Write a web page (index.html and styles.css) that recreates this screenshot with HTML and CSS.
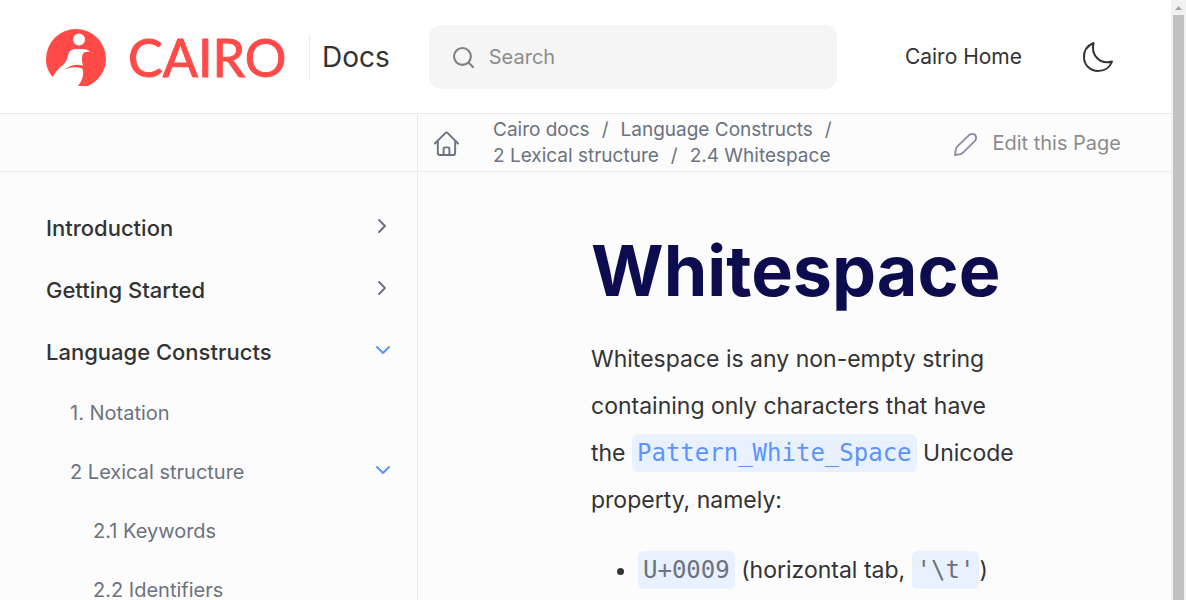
FILE: index.html
```html
<!DOCTYPE html>
<html lang="en">
<head>
<meta charset="utf-8">
<meta name="viewport" content="width=device-width, initial-scale=1">
<title>Whitespace - Cairo Docs</title>
<link rel="stylesheet" href="styles.css">
</head>
<body>
<div class="page">
  <header class="header">
    <a class="brand" href="#">
      <svg class="brand-mark" viewBox="0 0 60 58" aria-hidden="true">
        <path fill="#ff4a48" fill-rule="evenodd" d="M30 1A30 30 0 0 1 60 31C60 42 53 53 42 58H32C35 54 36.500 51 37 47C37.500 43 37 40.500 35 40C30 38.500 24 39 18.500 41.500C24 37 31 35.500 37 37.500C35.500 32 35.500 27 38 24.500C40 23.500 43 24 44 23.500C41 21 37 21 33 21C27 20.500 24 21.500 22.500 26C21 31 20.500 34 17 37C13 39.500 10 44 6.500 49C2 43 0 38 0 31A30 30 0 0 1 30 1ZM33 5.500A6 6 0 1 0 33 17.500A6 6 0 0 0 33 5.500Z"/>
      </svg>
      <span class="brand-name">CAIRO</span>
    </a>
    <a class="docs" href="#">Docs</a>
    <label class="search">
      <svg class="search-icon" viewBox="0 0 20 20" aria-hidden="true"><circle cx="9" cy="9" r="8"/><path d="M15 15l4 4"/></svg>
      <input class="search-input" type="text" placeholder="Search" aria-label="Search">
    </label>
    <a class="home-link" href="#">Cairo Home</a>
    <button class="theme" type="button" aria-label="Dark mode">
      <svg viewBox="0 0 32 32" aria-hidden="true"><path d="M11.500 2C4.500 5 1.500 10.500 2 17C2.500 24.500 8.500 30 16 30C22.500 30 28 26.500 30 20.500C18.500 24 8.500 14.500 11.500 2Z"/></svg>
    </button>
  </header>
  <div class="body">
    <nav class="sidebar" aria-label="Documentation">
      <div class="sidebar-top"></div>
      <div class="tree">
        <button class="row top" type="button">Introduction<svg class="chevron" viewBox="0 0 18 18"><path d="M6 3L12 9L6 15"/></svg></button>
        <button class="row top" type="button">Getting Started<svg class="chevron" viewBox="0 0 18 18"><path d="M6 3L12 9L6 15"/></svg></button>
        <button class="row top" type="button" aria-expanded="true">Language Constructs<svg class="chevron open" viewBox="0 0 18 18"><path d="M4 6L10 12L16 6"/></svg></button>
        <a class="row sub" href="#">1. Notation</a>
        <button class="row sub" type="button" aria-expanded="true">2 Lexical structure<svg class="chevron open" viewBox="0 0 18 18"><path d="M4 6L10 12L16 6"/></svg></button>
        <a class="row leaf" href="#">2.1 Keywords</a>
        <a class="row leaf" href="#">2.2 Identifiers</a>
      </div>
    </nav>
    <main class="main">
      <div class="toolbar">
        <a class="house" href="#" aria-label="Home">
          <svg viewBox="0 0 26 26" aria-hidden="true"><path d="M1 13L12 2Q13 1 14 2L25 13M4 10.500V23Q4 25 6 25H20Q22 25 22 23V10.500M10 25V18.500Q10 17 11.500 17H14.500Q16 17 16 18.500V25"/></svg>
        </a>
        <ul class="crumbs">
          <li><a href="#">Cairo docs</a></li>
          <li><a href="#">Language Constructs</a></li>
          <li><a href="#">2 Lexical structure</a></li>
          <li><a href="#">2.4 Whitespace</a></li>
        </ul>
        <a class="edit" href="#">
          <svg viewBox="0 0 26 26" aria-hidden="true"><path d="M2 25L3 19Q3.500 17 5 15.500L17 4Q20 2 23 4Q25 7 23 10L11 22Q10 23 8 24Z"/></svg>
          Edit this Page
        </a>
      </div>
      <article class="article">
        <h1>Whitespace</h1>
        <p>Whitespace is any non-empty string containing only characters that have the <a class="code" href="#">Pattern_White_Space</a> Unicode property, namely:</p>
        <ul>
          <li><code class="code">U+0009</code> (horizontal tab, <code class="code">'\t'</code>)</li>
        </ul>
      </article>
    </main>
  </div>
</div>
<div class="scrollbar" aria-hidden="true">
  <svg viewBox="0 0 15 15"><path d="M4 10L7.500 6L11 10Z"/></svg>
  <div class="thumb"></div>
</div>
</body>
</html>
```
FILE: styles.css
```css
* { box-sizing: border-box; }

body {
  margin: 0;
  height: 100vh;
  overflow: hidden;
  display: flex;
  font-family: Inter, "Liberation Sans", sans-serif;
  color: #333;
  background: #fcfcfc;
}

a { color: inherit; text-decoration: none; }
button { font: inherit; color: inherit; background: none; border: 0; padding: 0; }
svg { flex: none; fill: none; stroke-linecap: round; stroke-linejoin: round; }

.page { flex: 1; min-width: 0; display: flex; flex-direction: column; }

.header {
  display: flex;
  align-items: center;
  padding: 25px 57px 24px 46px;
  background: #fff;
  border-bottom: 1px solid #ebebeb;
}
.brand { display: flex; align-items: center; gap: 22px; }
.brand-mark { width: 60px; height: 58px; }
.brand-name {
  width: 161px;
  font-family: Lato, sans-serif;
  font-size: 52px;
  line-height: 58px;
  color: #ff4a48;
  -webkit-text-stroke: 1px #ff4a48;
}
.docs {
  margin-left: 20px;
  padding-left: 12px;
  border-left: 1px solid #ebebeb;
  font-size: 28px;
  line-height: 46px;
}
.search {
  flex: 1;
  max-width: 408px;
  margin-left: 39px;
  padding: 0 24px;
  height: 64px;
  display: flex;
  align-items: center;
  gap: 15px;
  border-radius: 12px;
  background: #f5f5f5;
}
.search-icon { width: 21px; height: 21px; stroke: #808080; stroke-width: 2; }
.search-input {
  flex: 1;
  min-width: 0;
  border: 0;
  padding: 0;
  background: none;
  font: 20px/32px Inter, sans-serif;
}
.search-input::placeholder { color: #8c8c8c; opacity: 1; }
.home-link { margin-left: auto; font-size: 21px; line-height: 32px; }
.theme { margin-left: 60px; height: 32px; }
.theme svg { width: 32px; height: 32px; stroke: #333; stroke-width: 2; }

.body { flex: 1; min-height: 0; display: flex; }

.sidebar {
  flex: none;
  width: 418px;
  border-right: 1px solid #ebebeb;
  overflow: hidden;
}
.sidebar-top { height: 58px; border-bottom: 1px solid #ebebeb; }
.tree { padding: 25px 26px 0 46px; }
.row {
  width: 100%;
  display: flex;
  align-items: center;
  justify-content: space-between;
  text-align: left;
}
.top { height: 62px; font-size: 22px; font-weight: 500; }
.sub, .leaf { height: 59px; font-size: 20px; color: #6b7280; }
.sub { padding-left: 24px; }
.leaf { padding-left: 47px; }
.chevron { width: 18px; height: 18px; margin-bottom: 4px; stroke: #6b7280; stroke-width: 2; }
.chevron.open { stroke: #5c94ff; }

.main { flex: 1; min-width: 0; overflow: hidden; }
.toolbar {
  height: 58px;
  padding: 1px 50px 0 16px;
  display: flex;
  align-items: center;
  border-bottom: 1px solid #ebebeb;
  color: #6b7280;
}
.house svg { display: block; width: 25px; height: 25px; stroke: currentColor; stroke-width: 2; }
.crumbs {
  flex: 1;
  max-width: 400px;
  margin: 0 0 0 34px;
  padding: 0;
  display: flex;
  flex-wrap: wrap;
  list-style: none;
  font-size: 19px;
  line-height: 26px;
}
.crumbs li:not(:last-child)::after { content: "/"; padding: 0 12px; }
.edit {
  margin-left: auto;
  display: flex;
  align-items: center;
  gap: 14px;
  font-size: 20px;
  color: #8c8c8c;
}
.edit svg { width: 25px; height: 25px; stroke: #8e8ea9; stroke-width: 2; }

.article {
  padding: 55px 153px 0 173px;
  font-size: 23px;
  line-height: 47px;
}
.article h1 {
  margin: 0;
  font-size: 70px;
  line-height: 88px;
  font-weight: 700;
  color: #0c0c4f;
}
.article p { margin: 21px 0 23px; }
.article ul { margin: 0; padding-left: 47px; }
.code {
  display: inline-block;
  padding: 5px;
  border-radius: 6px;
  background: #e9f1ff;
  font-family: "DejaVu Sans Mono", monospace;
  font-size: 24px;
  line-height: 28px;
  color: #6b7280;
}
a.code { color: #5c94ff; }

.scrollbar { flex: none; width: 15px; display: flex; flex-direction: column; background: #f1f1f1; }
.scrollbar svg { width: 15px; height: 15px; fill: #a3a3a3; }
.thumb { flex: 1; margin: 0 2px; background: #c1c1c1; }
```
